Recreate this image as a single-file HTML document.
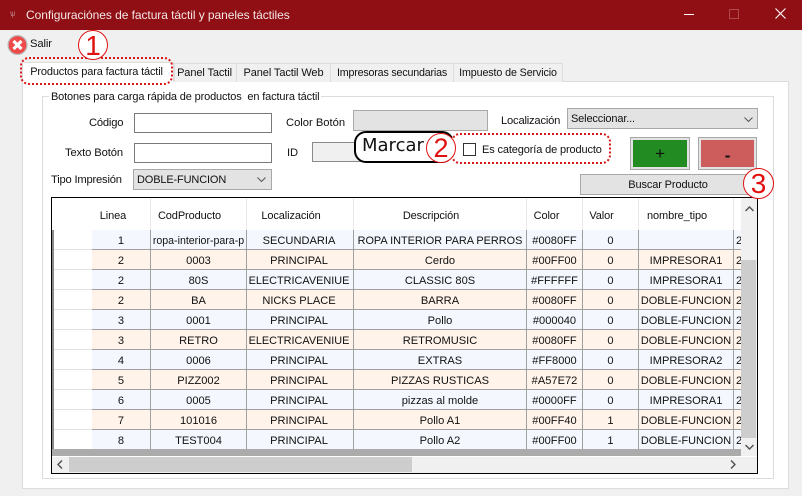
<!DOCTYPE html>
<html><head><meta charset="utf-8">
<style>
html,body{margin:0;padding:0}
body{width:802px;height:496px;overflow:hidden;background:#f0f0f0;position:relative;font-family:"Liberation Sans",sans-serif;font-size:11.2px;letter-spacing:-.1px;color:#111}
div,span{position:absolute;box-sizing:border-box;white-space:nowrap}
.t{line-height:14px}
.tab{top:63px;height:19px;background:#f0f0f0;border:1px solid #dcdcdc;border-bottom:none;line-height:18px;text-align:center;font-size:11px}
.in{background:#fff;border:1px solid #7a7a7a;height:20px}
.cb{background:#e3e3e3;border:1px solid #a8a8a8;height:21px;line-height:20px;padding-left:3px;font-size:11px}
.hd{top:198px;height:32px;line-height:36px;text-align:center;padding-right:18px;border-right:1px solid #e8e8e8;font-size:11px}
.r{left:53px;width:688px;height:20px}
.r div{top:0;height:20px;line-height:22px;text-align:center;border-right:1px solid #a0a0a0;border-bottom:1px solid #a0a0a0;overflow:hidden;font-size:11.1px;letter-spacing:0}
.r.o div{background:#f5f7ff}
.r.e div{background:#fff3ea}
.r div.c0{left:0;width:39px;background:#fff!important;border-right:none;border-bottom-color:#e2e2e2}
.c1{left:39px;width:59px}
.c2{left:98px;width:96px}
.c3{left:194px;width:107px;padding-right:2px}
.c4{left:301px;width:173px}
.c5{left:474px;width:56px}
.c6{left:530px;width:56px}
.c7{left:586px;width:95px}
.r div.c8{left:681px;width:7px;border-right:none;text-align:left;padding-left:2px}
.r div.s{font-size:10.9px}
.num{font-size:28px;color:#e01010;border:1.5px solid #e01010;border-radius:50%;background:#fff;width:30px;height:30px;line-height:29px;text-align:center;letter-spacing:0}
</style></head><body>

<div style="left:0;top:0;width:802px;height:30px;background:#8f0f14"></div>
<div class="t" style="left:26px;top:8px;color:#f4e6e6;font-size:12px;letter-spacing:-.06px">Configuraciónes de factura táctil y paneles táctiles</div>
<div style="left:10px;top:9px;width:8px;height:10px;color:#b88;font-size:8px;line-height:10px">ѱ</div>
<div style="left:684px;top:14px;width:10px;height:1px;background:#fff"></div>
<div style="left:729px;top:9px;width:10px;height:10px;border:1px solid #ad4a4e"></div>
<svg style="position:absolute;left:775px;top:8px" width="11" height="11"><path d="M.5.5l10 10M10.5.5l-10 10" stroke="#fff" stroke-width="1.1" fill="none"/></svg>

<svg style="position:absolute;left:7px;top:35px" width="21" height="20"><circle cx="10.5" cy="10" r="9.4" fill="#ee4a4a" stroke="#b8b8b8" stroke-width="1.2"/><path d="M6.5 6l8 8M14.5 6l-8 8" stroke="#fff" stroke-width="3.2" fill="none"/></svg>
<div class="t" style="left:30px;top:37px">Salir</div>

<div style="left:22px;top:81px;width:767px;height:408px;background:#fff;border:1px solid #dcdcdc"></div>
<div class="tab" style="left:22px;top:62px;width:152px;height:20px;background:#fff;border-bottom:1px solid #fff;letter-spacing:-.15px;padding-right:3px">Productos para factura táctil</div>
<div class="tab" style="left:174px;width:63px;padding-right:2px">Panel Tactil</div>
<div class="tab" style="left:236px;width:95px">Panel Tactil Web</div>
<div class="tab" style="left:330px;width:124px;font-size:10.7px;letter-spacing:-.18px">Impresoras secundarias</div>
<div class="tab" style="left:453px;width:110px;font-size:10.7px;letter-spacing:-.1px">Impuesto de Servicio</div>

<div style="left:42px;top:96px;width:732px;height:383px;border:1px solid #dcdcdc"></div>
<div class="t" style="left:49px;top:90px;background:#fff;padding:0 2px;font-size:11px;letter-spacing:-.15px">Botones para carga rápida de productos&nbsp; en factura táctil</div>

<div class="t" style="left:89px;top:116px;letter-spacing:-.2px">Código</div>
<div class="in" style="left:134px;top:113px;width:138px"></div>
<div class="t" style="left:65px;top:146px">Texto Botón</div>
<div class="in" style="left:134px;top:143px;width:138px"></div>
<div class="t" style="left:51px;top:173px;letter-spacing:-.2px">Tipo Impresión</div>
<div class="cb" style="left:133px;top:169px;width:139px;letter-spacing:-.15px">DOBLE-FUNCION</div>
<svg style="position:absolute;left:257px;top:177px" width="10" height="6"><path d="M.5.5l4 4 4-4" stroke="#555" fill="none"/></svg>

<div class="t" style="left:286px;top:116px;letter-spacing:0">Color Botón</div>
<div style="left:353px;top:110px;width:135px;height:21px;background:#e3e3e3;border:1px solid #a8a8a8"></div>
<div class="t" style="left:287px;top:146px">ID</div>
<div style="left:312px;top:142px;width:50px;height:20px;background:#f0f0f0;border:1px solid #8a8a8a"></div>
<div class="t" style="left:501px;top:114px;letter-spacing:-.2px">Localización</div>
<div class="cb" style="left:567px;top:108px;width:191px;letter-spacing:-.15px">Seleccionar...</div>
<svg style="position:absolute;left:744px;top:117px" width="10" height="6"><path d="M.5.5l4 4 4-4" stroke="#555" fill="none"/></svg>

<div style="left:354px;top:131px;width:100px;height:32px;background:#fff;border:2px solid #000;border-radius:12px"></div>
<div class="t" style="left:362px;top:136px;font-family:'DejaVu Sans',sans-serif;font-size:18px;line-height:20px;letter-spacing:0;color:#111">Marcar</div>
<div style="left:451px;top:133px;width:160px;height:31px;border:2px dotted #d81818;border-radius:9px;background:#fff"></div>
<div class="num" style="left:426px;top:133px;font-size:27px">2</div>
<div style="left:463px;top:143px;width:13px;height:13px;border:1px solid #333;background:#fff"></div>
<div class="t" style="left:482px;top:143px;font-size:11px;letter-spacing:-.13px">Es categoría de producto</div>

<div style="left:630px;top:137px;width:60px;height:33px;background:#228b22;border:3px solid #e3e3e3;outline:1px solid #a8a8a8;outline-offset:-1px;text-align:center;line-height:28px;font-size:17px;color:#111">+</div>
<div style="left:698px;top:137px;width:59px;height:33px;background:#cd5c5c;border:3px solid #e3e3e3;outline:1px solid #a8a8a8;outline-offset:-1px;text-align:center;line-height:31px;font-size:17px;font-weight:bold;color:#111">-</div>
<div style="left:580px;top:174px;width:176px;height:21px;background:#e3e3e3;border:1px solid #a8a8a8;text-align:center;line-height:20px;font-size:11px;letter-spacing:-.12px">Buscar Producto</div>

<div style="left:51px;top:197px;width:707px;height:277px;background:#fff;border:1px solid #000"></div>
<div class="hd" style="left:92px;width:59px;padding-right:16px">Linea</div>
<div class="hd" style="left:151px;width:96px">CodProducto</div>
<div class="hd" style="left:247px;width:107px">Localización</div>
<div class="hd" style="left:354px;width:173px">Descripción</div>
<div class="hd" style="left:527px;width:56px;padding-right:16px">Color</div>
<div class="hd" style="left:583px;width:56px;padding-right:18px">Valor</div>
<div class="hd" style="left:639px;width:95px">nombre_tipo</div>

<div class="r o" style="top:230px"><div class="c0"></div><div class="c1">1</div><div class="c2" style="font-size:10.6px">ropa-interior-para-p</div><div class="c3">SECUNDARIA</div><div class="c4" style="font-size:10.9px">ROPA INTERIOR PARA PERROS</div><div class="c5">#0080FF</div><div class="c6">0</div><div class="c7"></div><div class="c8">2</div></div>
<div class="r e" style="top:250px"><div class="c0"></div><div class="c1">2</div><div class="c2">0003</div><div class="c3">PRINCIPAL</div><div class="c4">Cerdo</div><div class="c5">#00FF00</div><div class="c6">0</div><div class="c7">IMPRESORA1</div><div class="c8">2</div></div>
<div class="r o" style="top:270px"><div class="c0"></div><div class="c1">2</div><div class="c2">80S</div><div class="c3 s">ELECTRICAVENIUE</div><div class="c4">CLASSIC 80S</div><div class="c5">#FFFFFF</div><div class="c6">0</div><div class="c7">IMPRESORA1</div><div class="c8">2</div></div>
<div class="r e" style="top:290px"><div class="c0"></div><div class="c1">2</div><div class="c2">BA</div><div class="c3">NICKS PLACE</div><div class="c4">BARRA</div><div class="c5">#0080FF</div><div class="c6">0</div><div class="c7 s">DOBLE-FUNCION</div><div class="c8">2</div></div>
<div class="r o" style="top:310px"><div class="c0"></div><div class="c1">3</div><div class="c2">0001</div><div class="c3">PRINCIPAL</div><div class="c4">Pollo</div><div class="c5">#000040</div><div class="c6">0</div><div class="c7 s">DOBLE-FUNCION</div><div class="c8">2</div></div>
<div class="r e" style="top:330px"><div class="c0"></div><div class="c1">3</div><div class="c2">RETRO</div><div class="c3 s">ELECTRICAVENIUE</div><div class="c4">RETROMUSIC</div><div class="c5">#0080FF</div><div class="c6">0</div><div class="c7 s">DOBLE-FUNCION</div><div class="c8">2</div></div>
<div class="r o" style="top:350px"><div class="c0"></div><div class="c1">4</div><div class="c2">0006</div><div class="c3">PRINCIPAL</div><div class="c4">EXTRAS</div><div class="c5">#FF8000</div><div class="c6">0</div><div class="c7">IMPRESORA2</div><div class="c8">2</div></div>
<div class="r e" style="top:370px"><div class="c0"></div><div class="c1">5</div><div class="c2">PIZZ002</div><div class="c3">PRINCIPAL</div><div class="c4">PIZZAS RUSTICAS</div><div class="c5">#A57E72</div><div class="c6">0</div><div class="c7 s">DOBLE-FUNCION</div><div class="c8">2</div></div>
<div class="r o" style="top:390px"><div class="c0"></div><div class="c1">6</div><div class="c2">0005</div><div class="c3">PRINCIPAL</div><div class="c4">pizzas al molde</div><div class="c5">#0000FF</div><div class="c6">0</div><div class="c7">IMPRESORA1</div><div class="c8">2</div></div>
<div class="r e" style="top:410px"><div class="c0"></div><div class="c1">7</div><div class="c2">101016</div><div class="c3">PRINCIPAL</div><div class="c4">Pollo A1</div><div class="c5">#00FF40</div><div class="c6">1</div><div class="c7 s">DOBLE-FUNCION</div><div class="c8">2</div></div>
<div class="r o" style="top:430px"><div class="c0"></div><div class="c1">8</div><div class="c2">TEST004</div><div class="c3">PRINCIPAL</div><div class="c4">Pollo A2</div><div class="c5">#00FF00</div><div class="c6">1</div><div class="c7 s">DOBLE-FUNCION</div><div class="c8">2</div></div>

<div style="left:52px;top:230px;width:2px;height:220px;background:#8a8a8a"></div>
<div style="left:52px;top:449px;width:689px;height:7px;background:#ababab"></div>

<div style="left:741px;top:198px;width:16px;height:258px;background:#f0f0f0"></div>
<div style="left:741px;top:260px;width:15px;height:178px;background:#cdcdcd"></div>
<svg style="position:absolute;left:745px;top:206px" width="9" height="6"><path d="M.5 5l4-4 4 4" stroke="#555" stroke-width="1.5" fill="none"/></svg>
<svg style="position:absolute;left:745px;top:444px" width="9" height="6"><path d="M.5 1l4 4 4-4" stroke="#555" stroke-width="1.5" fill="none"/></svg>
<div style="left:52px;top:456px;width:705px;height:17px;background:#f0f0f0;border-top:1px solid #fff"></div>
<div style="left:69px;top:457px;width:343px;height:15px;background:#cdcdcd"></div>
<svg style="position:absolute;left:57px;top:460px" width="6" height="9"><path d="M5 .5l-4 4 4 4" stroke="#555" stroke-width="1.5" fill="none"/></svg>
<svg style="position:absolute;left:730px;top:460px" width="6" height="9"><path d="M1 .5l4 4-4 4" stroke="#555" stroke-width="1.5" fill="none"/></svg>

<div style="left:20px;top:57px;width:153px;height:28px;border:2px dotted #d81818;border-radius:9px"></div>
<div class="num" style="left:78px;top:30px">1</div>
<div class="num" style="left:743px;top:168px;width:31px;height:31px">3</div>

</body></html>
